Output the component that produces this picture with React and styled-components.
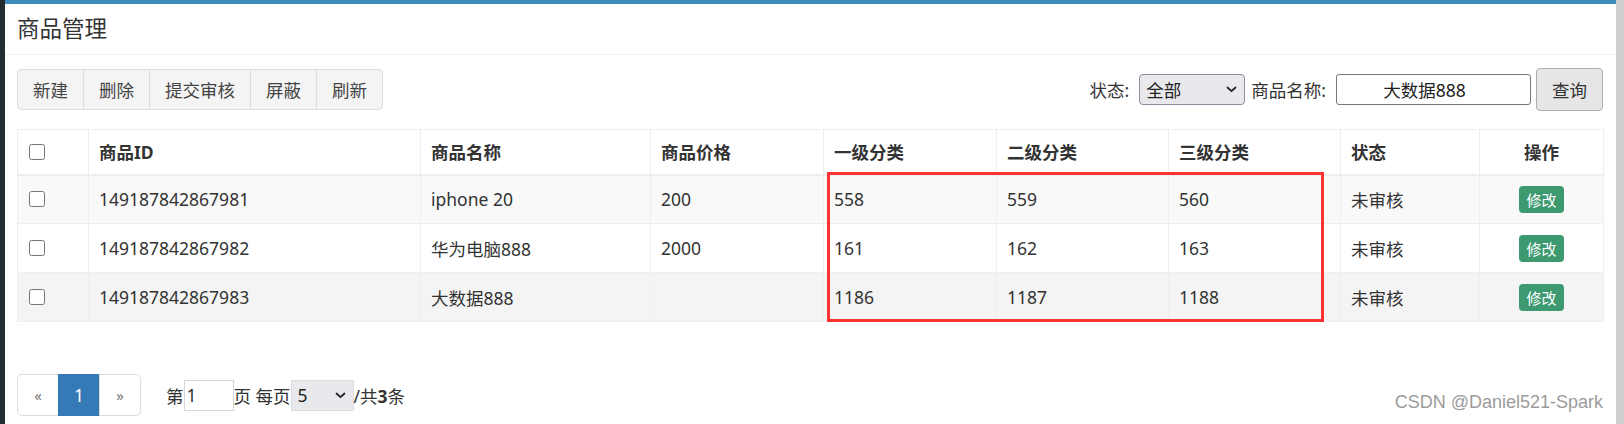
import React from "react";
import styled, { createGlobalStyle } from "styled-components";

const GlobalStyle = createGlobalStyle`
  html, body {
    margin: 0;
    padding: 0;
    background: #fff;
    overflow: hidden;
  }
  body {
    font-family: "Noto Sans", "Noto Sans CJK SC", sans-serif;
    color: #333;
  }
  * {
    box-sizing: border-box;
  }
`;

const Frame = styled.div`
  display: flex;
  width: 1624px;
  height: 424px;
  overflow: hidden;
`;

const SideEdge = styled.div`
  width: 5px;
  flex-shrink: 0;
  background: #222d32;
`;

const ScrollTrack = styled.div`
  width: 8px;
  flex-shrink: 0;
  background: #cfcfcf;
`;

const Main = styled.div`
  flex: 1;
  min-width: 0;
  display: flex;
  flex-direction: column;
  position: relative;
`;

const TopLine = styled.div`
  height: 4px;
  background: #3c8dbc;
`;

const PageHeader = styled.div`
  height: 51px;
  display: flex;
  align-items: center;
  padding-left: 12px;
  border-bottom: 1px solid #f0f0f0;
`;

const Title = styled.h1`
  margin: 0;
  font-size: 22.5px;
  font-weight: 400;
  line-height: 1;
  color: #333;
`;

const Content = styled.div`
  padding: 12px 13px 0 12px;
`;

const ToolRow = styled.div`
  display: flex;
  justify-content: space-between;
  align-items: center;
  height: 44px;
`;

const BtnGroup = styled.div`
  display: flex;
`;

const ToolButton = styled.button`
  height: 41px;
  padding: 0 15px;
  margin: 0 0 0 -1px;
  font-family: inherit;
  font-size: 17.5px;
  color: #444;
  background: #f4f4f4;
  border: 1px solid #ddd;
  border-radius: 0;
  &:first-child {
    margin-left: 0;
    border-radius: 4px 0 0 4px;
  }
  &:last-child {
    border-radius: 0 4px 4px 0;
  }
`;

const FilterBar = styled.div`
  display: flex;
  align-items: center;
`;

const FieldLabel = styled.span`
  font-size: 17.5px;
  margin-left: ${(p) => p.$left || 0}px;
  margin-right: 10px;
  color: #333;
`;

const SelectBox = styled.div`
  width: ${(p) => p.$w}px;
  height: 31px;
  display: flex;
  align-items: center;
  justify-content: space-between;
  padding: 0 7px 0 6px;
  font-size: 17.5px;
  color: #222;
  background: #e9e9ed;
  border: 1px solid ${(p) => (p.$flat ? "#dcdcdc" : "#8f8f9d")};
  border-radius: ${(p) => (p.$flat ? 0 : 4)}px;
`;

const SearchInput = styled.input`
  width: 195px;
  height: 31px;
  padding: 0 18px 0 0;
  font-family: inherit;
  font-size: 17.5px;
  color: #222;
  text-align: center;
  border: 1px solid #767676;
  border-radius: 3px;
  outline: none;
`;

const QueryButton = styled.button`
  height: 43px;
  margin-left: 5px;
  padding: 0 15px;
  font-family: inherit;
  font-size: 17.5px;
  color: #333;
  background: #e6e6e6;
  border: 1px solid #adadad;
  border-radius: 4px;
`;

const TableWrap = styled.div`
  position: relative;
  margin-top: 18px;
`;

const Grid = styled.table`
  width: 100%;
  table-layout: fixed;
  border-collapse: collapse;
  font-size: 17.5px;
  color: #333;
`;

const HeadCell = styled.th`
  height: 45px;
  padding: 0 10px;
  text-align: ${(p) => (p.$center ? "center" : "left")};
  font-weight: 700;
  border: 1px solid #eee;
  border-bottom: 2px solid #eee;
`;

const Row = styled.tr`
  background: ${(p) => p.$bg};
`;

const Cell = styled.td`
  height: 49px;
  padding: 0 10px;
  text-align: ${(p) => (p.$center ? "center" : "left")};
  border: 1px solid #eee;
  white-space: nowrap;
`;

const Check = styled.input`
  display: block;
  width: 16px;
  height: 16px;
  margin: 0 0 0 1px;
`;

const EditButton = styled.button`
  width: 45px;
  height: 27px;
  padding: 0;
  font-family: inherit;
  font-size: 15px;
  color: #fff;
  background: #3d9970;
  border: none;
  border-radius: 4px;
`;

const Highlight = styled.div`
  position: absolute;
  left: 810px;
  top: 43px;
  width: 497px;
  height: 150px;
  border: 3px solid #fe3333;
  pointer-events: none;
`;

const PagerRow = styled.div`
  display: flex;
  align-items: center;
  margin-top: 52px;
`;

const Pager = styled.div`
  display: flex;
`;

const PageItem = styled.span`
  width: 42px;
  height: 42px;
  margin-left: -1px;
  display: flex;
  align-items: center;
  justify-content: center;
  font-size: ${(p) => (p.$arrow ? 15 : 17.5)}px;
  color: ${(p) => (p.$active ? "#fff" : "#777")};
  background: ${(p) => (p.$active ? "#337ab7" : "#fff")};
  border: 1px solid ${(p) => (p.$active ? "#337ab7" : "#ddd")};
  &:first-child {
    margin-left: 0;
    border-radius: 5px 0 0 5px;
  }
  &:last-child {
    border-radius: 0 5px 5px 0;
  }
`;

const PageInfo = styled.div`
  display: flex;
  align-items: center;
  margin-left: 25px;
  font-size: 17.5px;
  color: #333;
`;

const PageInput = styled.input`
  width: 50px;
  height: 31px;
  padding: 0 2px;
  font-family: inherit;
  font-size: 17.5px;
  color: #333;
  border: 1px solid #d6d6d6;
  border-radius: 0;
  outline: none;
`;

const Watermark = styled.div`
  position: absolute;
  right: 13px;
  bottom: 11px;
  font-family: "Liberation Sans", Arial, sans-serif;
  font-size: 18px;
  color: #9c9c9c;
  text-shadow: 0 0 1px #fff;
`;

const Chevron = () => (
  <svg width="11" height="7" viewBox="0 0 11 7" fill="none">
    <path d="M1.5 1.5 L5.5 5.2 L9.5 1.5" stroke="#222" strokeWidth="1.8" strokeLinecap="round" strokeLinejoin="round" />
  </svg>
);

const columns = [
  { key: "check", width: 71 },
  { key: "id", label: "商品ID", width: 332 },
  { key: "name", label: "商品名称", width: 230 },
  { key: "price", label: "商品价格", width: 173 },
  { key: "c1", label: "一级分类", width: 173 },
  { key: "c2", label: "二级分类", width: 172 },
  { key: "c3", label: "三级分类", width: 172 },
  { key: "status", label: "状态", width: 139 },
  { key: "op", label: "操作", width: 124, center: true },
];

const rows = [
  { id: "149187842867981", name: "iphone 20", price: "200", c1: "558", c2: "559", c3: "560", bg: "#f9f9f9" },
  { id: "149187842867982", name: "华为电脑888", price: "2000", c1: "161", c2: "162", c3: "163", bg: "#fff" },
  { id: "149187842867983", name: "大数据888", price: "", c1: "1186", c2: "1187", c3: "1188", bg: "#f4f4f4" },
];

export default function App() {
  return (
    <>
      <GlobalStyle />
      <Frame>
        <SideEdge />
        <Main>
          <TopLine />
          <PageHeader>
            <Title>商品管理</Title>
          </PageHeader>
          <Content>
            <ToolRow>
              <BtnGroup>
                <ToolButton>新建</ToolButton>
                <ToolButton>删除</ToolButton>
                <ToolButton>提交审核</ToolButton>
                <ToolButton>屏蔽</ToolButton>
                <ToolButton>刷新</ToolButton>
              </BtnGroup>
              <FilterBar>
                <FieldLabel>状态:</FieldLabel>
                <SelectBox $w={106}>
                  <span>全部</span>
                  <Chevron />
                </SelectBox>
                <FieldLabel $left={6}>商品名称:</FieldLabel>
                <SearchInput defaultValue="大数据888" />
                <QueryButton>查询</QueryButton>
              </FilterBar>
            </ToolRow>

            <TableWrap>
              <Grid>
                <colgroup>
                  {columns.map((c) => (
                    <col key={c.key} style={{ width: c.width }} />
                  ))}
                </colgroup>
                <thead>
                  <tr>
                    {columns.map((c) => (
                      <HeadCell key={c.key} $center={c.center}>
                        {c.key === "check" ? <Check type="checkbox" readOnly /> : c.label}
                      </HeadCell>
                    ))}
                  </tr>
                </thead>
                <tbody>
                  {rows.map((r) => (
                    <Row key={r.id} $bg={r.bg}>
                      <Cell>
                        <Check type="checkbox" readOnly />
                      </Cell>
                      <Cell>{r.id}</Cell>
                      <Cell>{r.name}</Cell>
                      <Cell>{r.price}</Cell>
                      <Cell>{r.c1}</Cell>
                      <Cell>{r.c2}</Cell>
                      <Cell>{r.c3}</Cell>
                      <Cell>未审核</Cell>
                      <Cell $center>
                        <EditButton>修改</EditButton>
                      </Cell>
                    </Row>
                  ))}
                </tbody>
              </Grid>
              <Highlight />
            </TableWrap>

            <PagerRow>
              <Pager>
                <PageItem $arrow>«</PageItem>
                <PageItem $active>1</PageItem>
                <PageItem $arrow>»</PageItem>
              </Pager>
              <PageInfo>
                <span>第</span>
                <PageInput defaultValue="1" />
                <span>页 每页</span>
                <SelectBox $w={63} $flat>
                  <span>5</span>
                  <Chevron />
                </SelectBox>
                <span>
                  /共<b>3</b>条
                </span>
              </PageInfo>
            </PagerRow>
          </Content>
          <Watermark>CSDN @Daniel521-Spark</Watermark>
        </Main>
        <ScrollTrack />
      </Frame>
    </>
  );
}
